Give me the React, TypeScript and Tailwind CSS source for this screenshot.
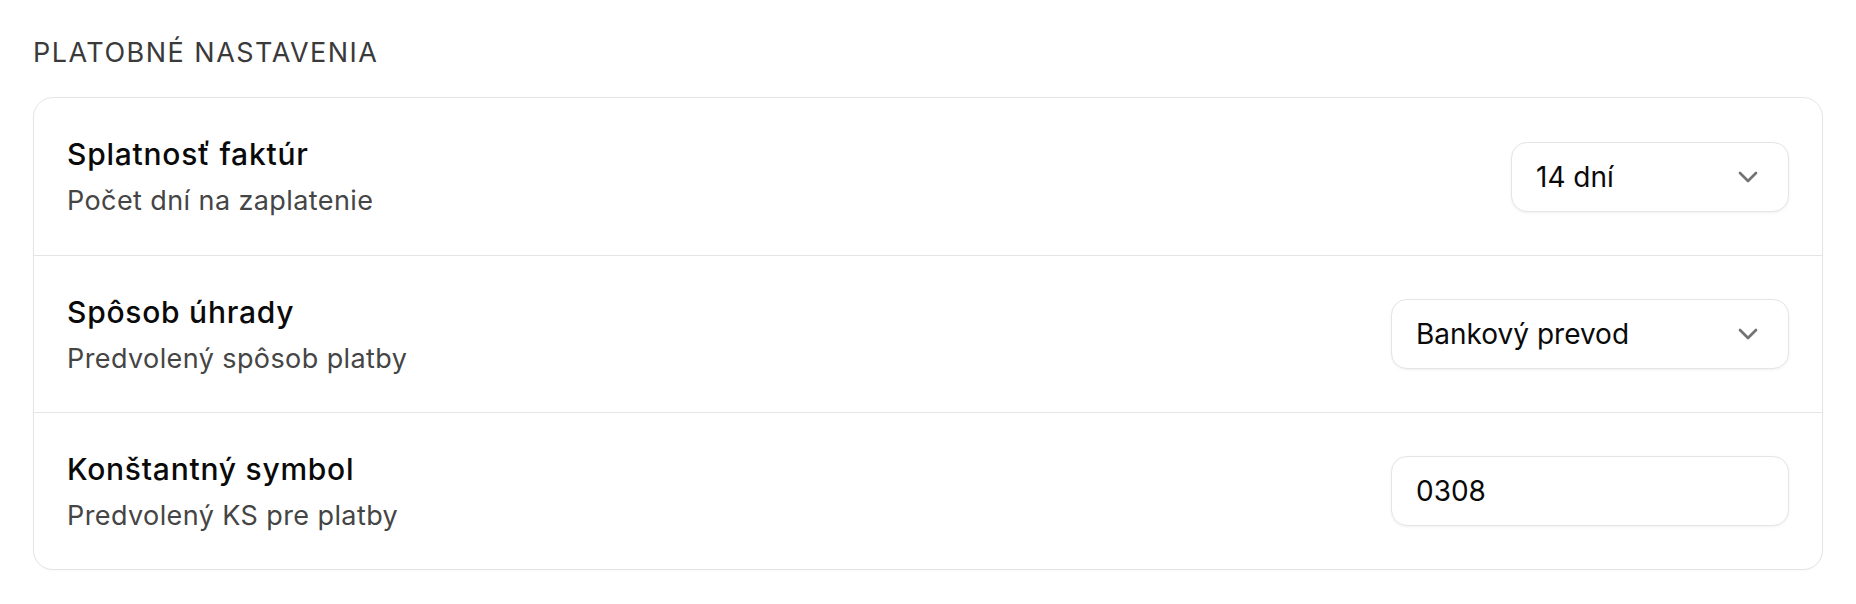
import React from "react";

interface Row {
  id: string;
  title: string;
  hint: string;
  kind: "select" | "input";
  value: string;
  width: string;
}

const rows: Row[] = [
  {
    id: "splatnost",
    title: "Splatnosť faktúr",
    hint: "Počet dní na zaplatenie",
    kind: "select",
    value: "14 dní",
    width: "w-[278px]",
  },
  {
    id: "sposob",
    title: "Spôsob úhrady",
    hint: "Predvolený spôsob platby",
    kind: "select",
    value: "Bankový prevod",
    width: "w-[398px]",
  },
  {
    id: "ks",
    title: "Konštantný symbol",
    hint: "Predvolený KS pre platby",
    kind: "input",
    value: "0308",
    width: "w-[398px]",
  },
];

function Chevron() {
  return (
    <svg
      width="32"
      height="32"
      viewBox="0 0 24 24"
      fill="none"
      stroke="#737373"
      strokeWidth="2"
      strokeLinecap="round"
      strokeLinejoin="round"
    >
      <path d="m6 9 6 6 6-6" />
    </svg>
  );
}

export default function App() {
  return (
    <div className="min-h-screen bg-white px-[33px] pt-[35px] font-['Inter',sans-serif]">
      <h2 className="text-[27px] leading-[36px] font-normal uppercase tracking-[0.055em] text-[#3a3a3a]">
        Platobné nastavenia
      </h2>
      <div className="mt-[26px] rounded-[20px] border border-[#e5e5e5] bg-white shadow-[0_1px_2px_rgba(0,0,0,0.03)]">
        {rows.map((row, i) => (
          <div
            key={row.id}
            className={
              "flex items-center justify-between px-[33px] h-[157px]" +
              (i > 0 ? " border-t border-[#e5e5e5]" : "")
            }
          >
            <div className="flex flex-col gap-[9px]">
              <span className="text-[30px] leading-[40px] font-medium tracking-[0.025em] text-[#0a0a0a]">
                {row.title}
              </span>
              <span className="text-[27px] leading-[36px] tracking-[0.015em] text-[#454545]">
                {row.hint}
              </span>
            </div>
            {row.kind === "select" ? (
              <div
                className={
                  row.width +
                  " flex h-[70px] items-center justify-between rounded-[16px] border border-[#e5e5e5] bg-white pl-6 pr-6 shadow-[0_1px_3px_rgba(0,0,0,0.06)]"
                }
              >
                <span className="text-[28px] text-[#0a0a0a]">{row.value}</span>
                <Chevron />
              </div>
            ) : (
              <div
                className={
                  row.width +
                  " flex h-[70px] items-center rounded-[16px] border border-[#e5e5e5] bg-white pl-6 pr-6 shadow-[0_1px_3px_rgba(0,0,0,0.06)]"
                }
              >
                <span className="text-[28px] text-[#0a0a0a]">{row.value}</span>
              </div>
            )}
          </div>
        ))}
      </div>
    </div>
  );
}
